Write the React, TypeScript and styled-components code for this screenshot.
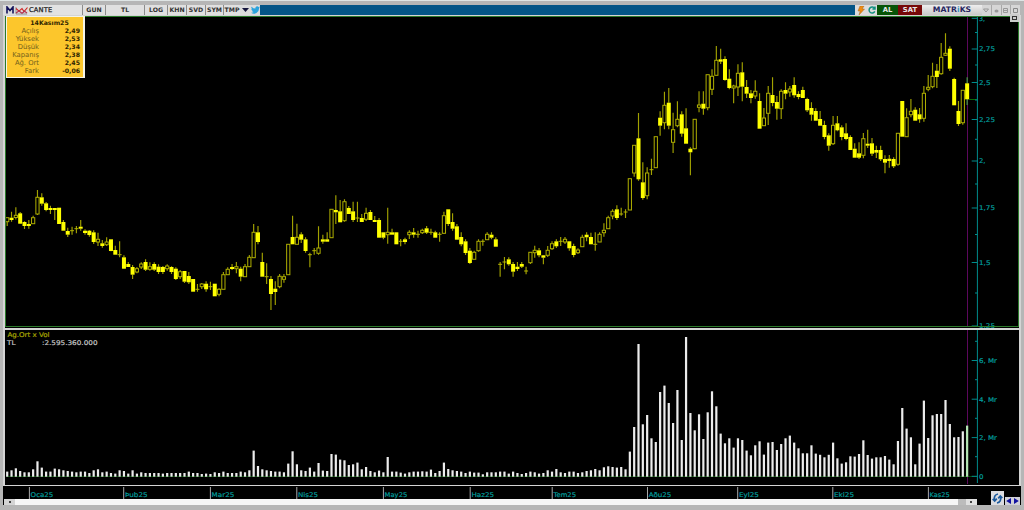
import styled, { createGlobalStyle } from 'styled-components';

type Kind = 'f' | 'h' | 'd';

const FIRST_X = 7.2;
const STEP = 4.324;
const BASELINE = 476.3;

// high, body top, body bottom, low, kind (f = filled, h = hollow, d = doji)
const CANDLES = `
217.7 217.7 221.7 226 h|211.7 217.7 220 221.7 f|207.3 215.3 217.5 219.5 h|212 213.3 223.7 224 f|221.3 222 226 229 f
220 224 226 228.7 f|215.7 217.7 223.7 223.7 h|190 197.3 214 215 h|193.3 197.3 203.7 205.7 f|202 203.3 210 211.3 f
205.7 208 209.7 214 f|208 208 209.3 220 f|207.7 207.7 224 224 f|220 222 230.7 230.7 f|227.7 231 234.7 237 f
226.7 230.7 230.7 234.7 d|226 228.7 228.7 233.3 d|220 226.7 228.7 230.7 f|229.3 230.7 233 234.7 f|230 230.7 235 236.7 f
230.3 232.3 242 244 f|232.7 239.3 242 246 h|240 243.3 246 247.7 f|237.3 242 244.7 246 h|239.3 239.3 251 251.3 f
245.7 250 254.7 254.7 f|241.3 254.7 254.7 257.3 d|255.3 257.3 268.7 269 f|262 264 267 267 f|265 267 274.7 279 f
267 268.7 272 273.3 h|262.3 264 267 269 h|259.3 262 269.7 271 f|262.3 266.7 269.3 270.7 h|262.3 264 269.7 271 f
264.3 266.7 272 274 f|266 267 272 274 f|264.3 266 268.7 270.7 h|266.3 267 272 274 f|267.3 268.7 279 280 f
270 271.7 276.7 279 h|271 271 281.7 283 f|272 276 282.3 284 f|279 279 291.7 291.7 f|284 289.3 289.3 291.7 d
283 284 286.7 289 h|281.3 283.7 289.3 291.7 f|281.7 286.7 286.7 290 d|283.7 283.7 296.3 296.3 f|288.3 289.3 294.3 296.3 h
272 274.7 289.3 289.3 h|267.3 269.3 274.7 274.7 h|264 267 268.7 270 f|262 266.7 268.7 273.3 h|266.7 268.7 276.7 281.3 f
264 266.7 276.7 276.7 h|255 257.3 266.7 266.7 h|224 232.3 257.7 258 h|226 232.3 242 244.3 f|252.7 262 276.7 276.7 f
263.3 276.7 276.7 284 d|276 279 294 310 f|281.3 288.7 292 305 f|274 276.3 286.7 288.3 h|274 276.7 279.3 282.7 h
244.3 244.3 274.7 274.7 h|215.7 237 244.3 244.3 f|223.7 237.3 244.3 244.3 h|232.3 234.3 239.7 243 f|237.3 239.3 251 252.7 f
252.7 254.7 254.7 267.3 d|248 250.7 250.7 254.7 d|226.3 248 253.3 254.7 h|234.7 239.3 241.7 243.7 f|232.3 239.3 241.7 241.7 f
209.3 209.3 237.7 238 h|195.3 210 212.3 224 f|200 211.3 222.3 222.3 f|199.3 201.7 220.7 221.7 h|206 208 214 214 f
201.7 211.3 220 222 f|201.7 218 218 222 d|214 218 222 222 f|207.7 213.3 219.3 221 h|210 212 220 220 f
216 220 222 222 f|218 220 237.7 237.7 f|232.3 232.3 237.7 239.3 f|207.7 232.3 234.7 243.7 h|228.7 232.3 234.7 234.7 f
232.3 232.3 244.3 244.3 f|239 241.3 241.3 246.3 d|237.7 239.3 242 244.3 f|230.3 232.3 234.7 239 h|228 232.3 234.7 237.7 f
230.7 234.3 234.3 237.7 d|228.7 230.3 232.7 234 h|226 228.3 232.7 234 f|228.7 232.3 232.3 234.7 d|230.7 232.3 237.7 237.7 f
232.3 234.3 234.3 241.7 d|211.7 215.7 233.3 234 h|209.3 209.3 224 226 f|213.3 222 228.7 230.7 f|224 226.3 239.7 239.7 f
232.3 237 244.3 246.3 f|239.3 241.3 253 255 f|248 250.7 263 264 f|250.7 252.3 259.3 259.3 h|239.3 241.3 250.7 251.7 h
239.3 241.3 241.3 245.7 d|232.3 234.3 239.7 239.7 h|232.3 234.7 237.7 239.3 f|237.3 239.3 246.7 246.7 f|262 264.3 264.3 276.7 d
257 262 262 269.3 d|257.3 259.3 264.3 265.7 f|262 264 271.7 276.7 f|262 266.7 269 271 f|262 264 266.7 268 f
266.7 271 271 274.3 d|252.3 252.3 262.7 264 h|245.7 250.3 252.7 257.7 h|248 250.3 255.3 257.3 f|255 255.3 257.7 264.3 f
246 250.3 255.3 257 h|241.3 243.7 248.7 250 h|239.3 241.3 246.3 248 f|237 241.3 241.3 246 d|237 239.3 242 244 h
241.3 241.3 248.3 250.7 f|243.7 246 255 257.3 f|248.3 250 252.7 254 h|234.7 237.3 246.7 246.7 h|232.3 234.7 237.3 241.3 f
232.7 237 244.3 244.3 f|232.3 244.3 244.3 250.7 d|232.3 234.3 242 242 h|223.3 230.3 232.7 236.7 h|215.7 217.7 228.7 228.7 h
209.3 211.3 216 219.3 h|205.3 209.3 218 220 f|207.7 214 214 215.7 d|209.3 212 212 218 d|178.7 178.7 210 210 h
145.3 145.3 173 176.7 h|113 138.3 179.3 180.7 f|162.3 182.3 198 199.7 f|167.3 173 195.7 199.3 h|158.7 169.7 169.7 175 d
136.7 136.7 167.7 167.7 h|111.3 117.7 125.7 135.7 f|91.7 105.3 122.7 129.3 h|88 102.7 125.7 129.3 f|112.7 129.7 142.3 153 h
101.3 119.3 125.7 127.3 h|111.3 114.3 133.7 136.7 f|108.3 128.3 143.7 143.7 f|147.3 148.7 152.3 175.3 f|119.3 119.3 148.7 149.3 h
91.3 105 107.3 112.3 h|91.3 103.7 108.7 114.7 f|74.7 74.7 107.7 110.3 h|69.3 76.3 89.3 95 h|46 60.3 75.3 75.3 h
48.7 59.3 61.7 64 f|56.3 59 80 80.7 f|69.3 78.7 88 89.3 f|84.7 86 88 103.3 h|64.3 73.3 87 96 h
62.3 72.3 86.7 101.3 f|80 87 93.7 98 f|90 93.3 98 103.3 f|80.3 91.3 96 98.7 h|93.3 101 128.7 128.7 f
108 118 125.7 126 h|86 93.3 113.3 125 h|77.3 95 103 106.3 f|96 102 108.7 119.7 f|89.3 91.3 108.7 119 h
82.3 90 93.7 99.3 f|86 89 92 96.7 h|77.3 85 95.3 97.7 f|91.3 94 97 99.3 f|86.7 90 98 98 f
97.7 99 110.3 112 f|102.3 108 114.7 120.7 f|108.3 111 120.7 120.7 f|111 119 125.7 125.7 f|120.7 125 137 139.3 f
133.3 135.3 145.7 150.7 f|116 125.3 143.7 145 h|116 123.3 130.3 131.3 f|125.3 127.3 137 140.3 f|123.3 133.3 139 140.3 f
135.3 137 150 150 f|143.3 148.7 157.7 157.7 f|142.3 153.3 157.7 159 f|133 138.7 155.3 158.3 h|129.7 143.7 145.7 148 f
138 143.3 153.7 156 f|145.7 150 152.7 158 f|145.7 150 159.3 161 f|155.3 159 162.7 173.3 f|155 158.7 161 167.7 f
157.3 159 166.3 168 f|133.3 133.3 164.3 165.7 h|101 101 136.7 136.7 f|108.3 117.7 136.7 136.7 h|99 111.3 114.7 117.3 h
107.3 109.7 120.7 120.7 f|108 114.3 119.3 122.7 f|86 93.3 118.3 121.7 h|75 87.3 89.3 91.3 h|62.7 76.3 86.7 88.3 h
64 70.7 77 88 f|43 57.3 73.7 74.7 h|33.3 53.3 55.3 56 h|46.3 48.7 68.7 71 f|77.7 79 105.3 105.3 f
101 111 124 126 f|90.3 90.3 122.7 124.7 h|77.3 83.3 99.3 105 f`
  .trim()
  .split(/[|\n]/)
  .map((row) => {
    const [high, top, bottom, low, kind] = row.split(' ');
    return { high: +high, top: +top, bottom: +bottom, low: +low, kind: kind as Kind };
  });

const VOLUMES = [
  4.7, 6, 8, 5.3, 4, 4, 7, 15, 8.7, 4.7, 4.7, 7.7, 7, 6, 5.3, 4.7, 4, 4.7, 4.7, 3.3, 6, 7, 4, 4.7, 3.3, 2.7, 6, 5.3,
  2.7, 6, 2.7, 4, 3.3, 3.3, 3.3, 3.3, 2.7, 3.3, 3.3, 3.3, 3.3, 3.3, 4.7, 3.3, 3.3, 2.3, 2.7, 2.3, 4, 3.3, 4.7, 3.3,
  3.3, 3.3, 4.7, 4, 6, 25.7, 10.3, 7, 6, 5.3, 4.7, 4.7, 4, 12.7, 25, 12, 6, 5.3, 8.7, 4.7, 13.3, 5.7, 5.3, 22.3, 21.7,
  16.7, 16, 11.3, 12, 13.7, 7, 9.3, 5.3, 4, 5.7, 4, 19.3, 4.7, 4.7, 3.7, 2.7, 4, 4.7, 4.7, 5, 4.7, 6.7, 3.3, 5.3, 13.7,
  7.3, 6, 5.3, 4.7, 3.3, 4.7, 3.7, 3.7, 2, 4, 4, 4, 4.7, 4.7, 2.7, 4.7, 3.3, 2.3, 3.3, 4.7, 4, 2.7, 3.3, 6, 4.7, 7.3,
  4, 3.3, 4.7, 4.7, 3.3, 4, 5.3, 6, 7.3, 6, 9, 10, 9.3, 8.7, 9.3, 7, 24.7, 49.3, 132.3, 52, 61.3, 38, 34.3, 84.3,
  90.7, 73.3, 53.3, 86.3, 36.3, 139.3, 63.3, 46, 62, 37.3, 64, 85, 70, 42.7, 33, 38, 28.7, 38, 36.3, 25.7, 21, 31, 35,
  21.7, 33.7, 34.3, 26.3, 32.3, 38, 40.7, 33.7, 28, 23, 23, 31, 22.7, 21.5, 19, 21.5, 33.7, 18, 12.7, 14, 20, 19.7,
  22.3, 36, 21.3, 17.7, 19, 19, 20.3, 16.7, 12, 35.3, 68.3, 47.7, 39, 12, 32.7, 75.7, 38.3, 61, 62.3, 62.3, 76.3, 52.3,
  39, 39.3, 45, 50.7
];

const PRICE_TICKS = [
  { y: 18.3, text: '3,', width: 6 },
  { y: 49, text: '2,75', width: 16 },
  { y: 82.5, text: '2,5', width: 11.5 },
  { y: 119.5, text: '2,25', width: 16 },
  { y: 161, text: '2,', width: 6.5 },
  { y: 208, text: '1,75', width: 16 },
  { y: 262.5, text: '1,5', width: 11.5 },
  { y: 326, text: '1,25', width: 16 }
];
const PRICE_MINOR = [32.5, 65, 100, 139.3, 184, 234.5, 293];

const VOLUME_TICKS = [
  { y: 360.5, text: '6, Mr', width: 18 },
  { y: 399.2, text: '4, Mr', width: 18 },
  { y: 437.6, text: '2, Mr', width: 18 },
  { y: 476.3, text: '0', width: 4.5 }
];
const VOLUME_MINOR = [341.3, 379.7, 418.3, 456.7];

const MONTHS = [
  { x: 29.4, text: 'Oca25' },
  { x: 123.7, text: 'Þub25' },
  { x: 210.4, text: 'Mar25' },
  { x: 296.8, text: 'Nis25' },
  { x: 383.4, text: 'May25' },
  { x: 470.2, text: 'Haz25' },
  { x: 552.2, text: 'Tem25' },
  { x: 647.5, text: 'Aðu25' },
  { x: 737.7, text: 'Eyl25' },
  { x: 832.8, text: 'Eki25' },
  { x: 928.4, text: 'Kas25' }
];

const QUOTES = [
  ['Açılış', '2,49'],
  ['Yüksek', '2,53'],
  ['Düşük', '2,34'],
  ['Kapanış', '2,38'],
  ['Ağ. Ort', '2,45'],
  ['Fark', '-0,06']
];

const TABS = [
  { text: 'GUN', width: 23 },
  { text: 'TL', width: 39 },
  { text: 'LOG', width: 23 },
  { text: 'KHN', width: 19 },
  { text: 'SVD', width: 19 },
  { text: 'SYM', width: 18 },
  { text: 'TMP', width: 17 }
];

export default function App() {
  return (
    <>
      <GlobalStyle />
      <Window>
        <Toolbar />
        <PricePanel>
          <PriceChart />
          <QuoteBox />
          <MaximizeBox />
        </PricePanel>
        <VolumePanel>
          <VolumeChart />
        </VolumePanel>
        <Footer>
          <FooterMain>
            <TimeAxis />
            <ScrollBar>
              <ScrollStart>
                <ScrollDot />
              </ScrollStart>
              <ScrollEnd>
                <ScrollThumb />
                <ScrollDot />
              </ScrollEnd>
            </ScrollBar>
          </FooterMain>
          <FooterCorner>
            <SyncButton>
              <svg width="11" height="11" viewBox="0 0 11 11" fill="none" stroke="#1d5a9c" strokeWidth="1.7">
                <path d="M6 1C3 1.6 1.6 4 2.6 7.4M.6 6l2.1 2L4.8 5.6" />
                <path d="M5 10C8 9.4 9.4 7 8.4 3.6M10.4 5L8.3 3 6.2 5.4" />
              </svg>
            </SyncButton>
            <svg width="15" height="8" viewBox="0 0 15 8">
              <rect width="15" height="8" fill="#d0d0d8" />
              <path d="M6 1v6L1.2 4zM9 1v6l4.8-3z" fill="#1212a0" />
            </svg>
          </FooterCorner>
        </Footer>
      </Window>
    </>
  );
}

const Toolbar = () => {
  return (
    <ToolbarContainer>
      <IconCell width={11}>
        <svg width="8" height="8" viewBox="0 0 8 8" fill="none" stroke="#15155c" strokeWidth="1.6">
          <path d="M1 7.5V1l3 3.6L7 1v6.5" />
        </svg>
      </IconCell>
      <IconCell width={13}>
        <svg width="13" height="9" viewBox="0 0 13 9" fill="none">
          <path d="M1 1v7h11" stroke="#777" strokeWidth=".7" />
          <path d="M1 2.5l3 2.6 3-2.6 2 3 3.5-4" stroke="#d02020" strokeWidth="1.1" />
          <path d="M1 7l3-2 3 2.2 2.5-2L12 7" stroke="#b03050" strokeWidth="1.1" />
        </svg>
      </IconCell>
      <SymbolCell>CANTE</SymbolCell>
      {TABS.map((tab) => (
        <TabCell key={tab.text} width={tab.width}>
          {tab.text}
        </TabCell>
      ))}
      <IconCell width={10}>
        <svg width="7" height="4" viewBox="0 0 7 4">
          <path d="M0 0h7L3.5 4z" fill="#15153c" />
        </svg>
      </IconCell>
      <IconCell width={10}>
        <svg width="9" height="8" viewBox="0 0 24 20">
          <path
            d="M24 2.4a10 10 0 0 1-2.8.8A5 5 0 0 0 23.3.5a10 10 0 0 1-3.1 1.2 4.9 4.9 0 0 0-8.4 4.5A14 14 0 0 1 1.7 1a4.9 4.9 0 0 0 1.5 6.6A5 5 0 0 1 1 7c0 2.3 1.6 4.4 3.9 4.9a5 5 0 0 1-2.2.1 4.9 4.9 0 0 0 4.6 3.4A10 10 0 0 1 0 17.5 14 14 0 0 0 21.5 5z"
            fill="#2aa3dc"
          />
        </svg>
      </IconCell>
      <TitleFill />
      <IconCell width={11}>
        <svg width="8" height="9" viewBox="0 0 8 9">
          <path d="M3 0h4L5.2 3H7.5L2 9l1.2-4H1z" fill="#f08c10" stroke="#a86a20" strokeWidth=".5" />
        </svg>
      </IconCell>
      <IconCell width={11}>
        <svg width="8" height="8" viewBox="0 0 8 8" fill="none" stroke="#129080" strokeWidth="1.5">
          <path d="M6.6 2.4A3 3 0 1 0 6.8 5.4M7 .6v2.3H4.4" />
        </svg>
      </IconCell>
      <TradeButton color="#075407" width={21}>
        AL
      </TradeButton>
      <TradeButton color="#760808" width={24}>
        SAT
      </TradeButton>
      <Brand>
        MATR<BrandDot>i</BrandDot>KS
      </Brand>
      <WindowButtons>
        <WindowButton>
          <svg width="6" height="5" viewBox="0 0 6 5" fill="none" stroke="#999">
            <path d="M.5 1h5L3 4z" />
          </svg>
        </WindowButton>
        <WindowButton>
          <svg width="5" height="5" viewBox="0 0 5 5">
            <ellipse cx="2.5" cy="3" rx="2" ry="1.5" fill="#999" />
          </svg>
        </WindowButton>
        <WindowButton>
          <svg width="5" height="5" viewBox="0 0 5 5" fill="none" stroke="#999">
            <path d="M.5.5h4v4h-4zM1 2.5h3" />
          </svg>
        </WindowButton>
        <WindowButton>
          <svg width="5" height="5" viewBox="0 0 5 5" fill="none" stroke="#888">
            <path d="M.5.5h4v4h-4z" />
          </svg>
        </WindowButton>
      </WindowButtons>
    </ToolbarContainer>
  );
};

const QuoteBox = () => {
  return (
    <QuoteContainer>
      <QuoteTitle>14Kasım25</QuoteTitle>
      {QUOTES.map(([name, value]) => (
        <QuoteRow key={name}>
          <QuoteName>{name}</QuoteName>
          <QuoteValue>{value}</QuoteValue>
        </QuoteRow>
      ))}
    </QuoteContainer>
  );
};

const PriceChart = () => {
  return (
    <Chart width="1014" height="312" viewBox="5 16 1014 312">
      <line x1="967.5" x2="967.5" y1="17" y2="326" stroke="#5c085c" />
      {CANDLES.map((candle, index) => (
        <Candle key={index} x={FIRST_X + index * STEP} last={index === CANDLES.length - 1} {...candle} />
      ))}
      <line x1="969" x2="977" y1="99.5" y2="99.5" stroke="#086a08" />
      <Axis top={16} bottom={326} ticks={PRICE_TICKS} minor={PRICE_MINOR} />
      <rect x="5.5" y="16.5" width="1013" height="310" fill="none" stroke="#2b7a2b" />
    </Chart>
  );
};

const VolumeChart = () => {
  return (
    <Chart width="1014" height="155" viewBox="5 330 1014 155">
      <line x1="967.5" x2="967.5" y1="330" y2="484" stroke="#5c085c" />
      <line x1="6" x2="977" y1="476.5" y2="476.5" stroke="#0a4a0a" />
      {VOLUMES.map((height, index) => (
        <rect
          key={index}
          x={FIRST_X + index * STEP - 1.1}
          y={BASELINE - height}
          width="2.2"
          height={height + 0.4}
          fill={index === VOLUMES.length - 1 ? '#b4e6b4' : '#ececec'}
        />
      ))}
      <Axis top={330} bottom={483} ticks={VOLUME_TICKS} minor={VOLUME_MINOR} />
      <Label x={7.5} y={337} color="#a8a800" width={42}>
        Ag.Ort x Vol
      </Label>
      <Label x={7} y={344.8} color="#c4c4c4" width={8.5}>
        TL
      </Label>
      <Label x={42} y={344.8} color="#c4c4c4" width={55.5}>
        :2.595.360.000
      </Label>
    </Chart>
  );
};

const TimeAxis = () => {
  return (
    <Chart width="981" height="12" viewBox="5 487 981 12">
      {MONTHS.map((month) => (
        <g key={month.text}>
          <line x1={month.x} x2={month.x} y1="487" y2="499" stroke="#a8a8a8" />
          <Label x={month.x + 1.2} y={497.2} color="#009c9c" width={month.text[2] === 's' || month.text[0] === 'E' ? 20 : 22.7}>
            {month.text}
          </Label>
        </g>
      ))}
    </Chart>
  );
};

const Label = (props: { x: number; y: number; width: number; color: string; children: string }) => {
  return (
    <ChartText
      x={props.x}
      y={props.y}
      fill={props.color}
      stroke={props.color}
      textLength={props.width}
      lengthAdjust="spacingAndGlyphs"
    >
      {props.children}
    </ChartText>
  );
};

const Candle = (props: {
  x: number;
  high: number;
  top: number;
  bottom: number;
  low: number;
  kind: Kind;
  last: boolean;
}) => {
  const { x, high, top, bottom, low, kind, last } = props;
  const wick = last ? '#46a046' : '#a2a200';
  return (
    <g>
      <path d={`M${x} ${high}V${top}M${x} ${bottom}V${low}`} stroke={wick} strokeWidth="1.15" />
      {kind === 'f' && <rect x={x - 2} y={top} width="4" height={Math.max(bottom - top, 2)} fill="#ffff00" />}
      {kind === 'h' && (
        <rect x={x - 1.6} y={top} width="3.2" height={Math.max(bottom - top, 2)} fill="#000" stroke="#b0b000" />
      )}
      {kind === 'd' && <line x1={x - 2} x2={x + 2} y1={top} y2={top} stroke="#b4b400" />}
    </g>
  );
};

const Axis = (props: {
  top: number;
  bottom: number;
  ticks: { y: number; text: string; width: number }[];
  minor: number[];
}) => {
  return (
    <g>
      <line x1="977.4" x2="977.4" y1={props.top} y2={props.bottom} stroke="#008c8c" />
      {props.minor.map((y) => (
        <line key={y} x1="975" x2="977.4" y1={y} y2={y} stroke="#008c8c" />
      ))}
      {props.ticks.map((tick) => (
        <g key={tick.y}>
          <line x1="971.7" x2="977.4" y1={tick.y} y2={tick.y} stroke="#008c8c" />
          <Label x={979} y={tick.y + 2.4} color="#009c9c" width={tick.width}>
            {tick.text}
          </Label>
        </g>
      ))}
    </g>
  );
};

const GlobalStyle = createGlobalStyle`
  body {
    margin: 0;
    overflow: hidden;
    background: #b9b9b9;
    font-family: 'DejaVu Sans', sans-serif;
  }
  * {
    box-sizing: border-box;
  }
`;

const Window = styled.div`
  display: flex;
  flex-direction: column;
  width: 1024px;
  height: 510px;
  padding: 5px 3px 0 3px;
  background: linear-gradient(#dfe5e5 0, #dfe5e5 1px, #b6b6b6 1px, #b6b6b6 100%);
`;

const ToolbarContainer = styled.div`
  display: flex;
  height: 10px;
  width: 1017px;
  border-left: 1px solid #ddd;
  background: #d5d5d5;
`;

const IconCell = styled.div<{ width: number }>`
  display: flex;
  align-items: center;
  justify-content: center;
  width: ${(props) => props.width}px;
  background: #dcdcdc;
`;

const SymbolCell = styled.div`
  width: 54px;
  padding-left: 1px;
  font-size: 6.7px;
  letter-spacing: 0.15px;
  line-height: 10px;
  color: #222;
  -webkit-text-stroke: 0.25px #222;
  background: #e2e2e2;
`;

const TabCell = styled.div<{ width: number }>`
  width: ${(props) => props.width}px;
  border-left: 1px solid #8c8c8c;
  font-size: 6.2px;
  font-weight: bold;
  line-height: 10px;
  text-align: center;
  white-space: nowrap;
  color: #333;
  background: #e0e0e0;
`;

const TitleFill = styled.div`
  flex: 1;
  background: #045587;
`;

const TradeButton = styled.div<{ color: string; width: number }>`
  width: ${(props) => props.width}px;
  font-size: 6.8px;
  font-weight: bold;
  line-height: 10px;
  text-align: center;
  color: #e8e8e8;
  background: ${(props) => props.color};
`;

const Brand = styled.div`
  width: 60px;
  font-size: 7.7px;
  font-weight: bold;
  line-height: 10px;
  text-align: center;
  color: #25255e;
  background: linear-gradient(#eee, #c9c9c9);
`;

const BrandDot = styled.span`
  color: #3a94c4;
`;

const WindowButtons = styled.div`
  display: flex;
  width: 38px;
  gap: 1px;
  background: #a8a8a8;
`;

const WindowButton = styled.div`
  display: flex;
  flex: 1;
  align-items: center;
  justify-content: center;
  background: #d6d6d6;
`;

const PricePanel = styled.div`
  position: relative;
  width: 1018px;
  height: 314px;
  border: solid #d4d4d4;
  border-width: 1px 2px 1px 2px;
  background: #000;
`;

const Chart = styled.svg`
  display: block;
  flex-shrink: 0;
`;

const ChartText = styled.text`
  font-size: 6.5px;
  font-family: 'DejaVu Sans', sans-serif;
  stroke-width: 0.2px;
`;

const QuoteContainer = styled.div`
  position: absolute;
  top: 0;
  left: 1px;
  display: flex;
  flex-direction: column;
  width: 79px;
  height: 62px;
  padding: 2px 3px 0 4px;
  border: 1px solid #f4f4e8;
  border-right-width: 2px;
  background: #fcc62c;
`;

const QuoteTitle = styled.div`
  padding-left: 8px;
  font-size: 6.2px;
  font-weight: bold;
  line-height: 8px;
  text-align: center;
  color: #2e2400;
`;

const QuoteRow = styled.div`
  display: flex;
  justify-content: space-between;
  height: 8.05px;
  line-height: 8px;
`;

const QuoteName = styled.div`
  display: flex;
  justify-content: flex-end;
  width: 28px;
  font-size: 6.8px;
  white-space: nowrap;
  color: #71601c;
`;

const QuoteValue = styled.div`
  font-size: 6.2px;
  font-weight: bold;
  color: #2e2400;
`;

const MaximizeBox = styled.div`
  position: absolute;
  top: -2px;
  right: 0;
  width: 9px;
  height: 8px;
  border: 2px solid #ccc;
  background: #ccc;
  box-shadow: inset 0 0 0 1px #333;
`;

const VolumePanel = styled.div`
  width: 1018px;
  height: 157px;
  border: solid #d4d4d4;
  border-width: 1px 2px 1px 2px;
  background: #000;
`;

const Footer = styled.div`
  display: flex;
  width: 1018px;
  height: 19px;
`;

const FooterMain = styled.div`
  display: flex;
  flex-direction: column;
  width: 975px;
  flex: 1;
  padding: 1px 0 0 2px;
  background: #000;
`;

const ScrollBar = styled.div`
  display: flex;
  justify-content: space-between;
  width: 973px;
  height: 6px;
  margin-left: -1px;
  background: #f6f6f6;
`;

const ScrollStart = styled.div`
  display: flex;
  align-items: center;
  justify-content: center;
  width: 11px;
  background: #d4d4d4;
`;

const ScrollEnd = styled.div`
  display: flex;
  align-items: center;
  gap: 4px;
  width: 19px;
  background: #e0e0e0;
`;

const ScrollThumb = styled.div`
  width: 8px;
  height: 6px;
  background: #bcbcbc;
`;

const ScrollDot = styled.div`
  width: 2px;
  height: 2px;
  background: #444;
`;

const FooterCorner = styled.div`
  display: flex;
  align-items: flex-end;
  gap: 1px;
  width: 30px;
  background: #000;
`;

const SyncButton = styled.div`
  display: flex;
  align-items: center;
  justify-content: center;
  width: 13px;
  height: 14px;
  background: #dcdce0;
`;
